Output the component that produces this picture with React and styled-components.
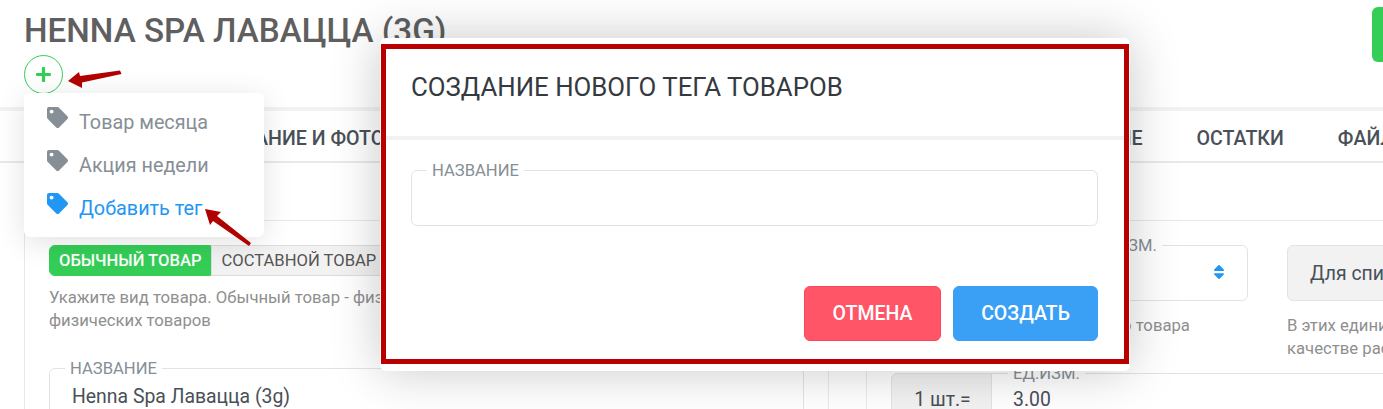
import React from "react";
import styled, { createGlobalStyle } from "styled-components";
import { FaPlus, FaTag, FaSort } from "react-icons/fa";

const GlobalStyle = createGlobalStyle`
  html, body {
    margin: 0;
    padding: 0;
    background: #fff;
    font-family: "Roboto", sans-serif;
    overflow: hidden;
  }
`;

const tabs = [
  "ОПИСАНИЕ И ФОТО",
  "ХАРАКТЕРИСТИКИ",
  "КОМПЛЕКТ",
  "СКЛАД",
  "ЦЕНООБРАЗОВАНИЕ",
  "ОСТАТКИ",
  "ФАЙЛЫ",
];

const tags = [
  { label: "Товар месяца" },
  { label: "Акция недели" },
  { label: "Добавить тег", active: true },
];

const App = () => {
  return (
    <Page>
      <GlobalStyle />
      <Header>
        <Title>HENNA SPA ЛАВАЦЦА (3G)</Title>
        <AddButton>
          <FaPlus size={17} />
        </AddButton>
        <SaveButton />
      </Header>

      <Tabs>
        {tabs.map((tab) => (
          <Tab key={tab}>{tab}</Tab>
        ))}
      </Tabs>

      <Columns>
        <Card>
          <ToggleGroup>
            <ToggleButton active>ОБЫЧНЫЙ ТОВАР</ToggleButton>
            <ToggleButton>СОСТАВНОЙ ТОВАР</ToggleButton>
          </ToggleGroup>
          <Hint>
            Укажите вид товара. Обычный товар - физический товар, составной
            товар - набор из
            <br />
            физических товаров
          </Hint>
          <NameField>
            <Legend>НАЗВАНИЕ</Legend>
            <FieldValue>Henna Spa Лавацца (3g)</FieldValue>
          </NameField>
        </Card>

        <Card>
          <UnitRow>
            <UnitColumn>
              <SelectField>
                <Legend>ОСНОВНАЯ ЕДИНИЦА ЕД.ИЗМ.</Legend>
                <SelectArrows>
                  <FaSort size={18} />
                </SelectArrows>
              </SelectField>
              <Hint>Основная единица учёта этого товара</Hint>
            </UnitColumn>
            <UnitColumn>
              <ReadonlyBox>Для списания</ReadonlyBox>
              <Hint>
                В этих единицах товар списывается в
                <br />
                качестве расходного материала
              </Hint>
            </UnitColumn>
          </UnitRow>
          <RatioRow>
            <RatioAddon>1 шт.=</RatioAddon>
            <RatioField>
              <Legend>ЕД.ИЗМ.</Legend>
              <FieldValue>3.00</FieldValue>
            </RatioField>
          </RatioRow>
        </Card>
      </Columns>

      <TagMenu>
        {tags.map((tag) => (
          <TagItem key={tag.label} active={tag.active}>
            <FaTag size={21} />
            <span>{tag.label}</span>
          </TagItem>
        ))}
      </TagMenu>

      <Modal>
        <ModalTitle>СОЗДАНИЕ НОВОГО ТЕГА ТОВАРОВ</ModalTitle>
        <ModalBody>
          <ModalField>
            <Legend>НАЗВАНИЕ</Legend>
          </ModalField>
        </ModalBody>
        <ModalFooter>
          <ActionButton danger>ОТМЕНА</ActionButton>
          <ActionButton>СОЗДАТЬ</ActionButton>
        </ModalFooter>
        <Highlight />
      </Modal>

      <Arrows viewBox="0 0 1383 409">
        <path d="M68 81 L79 72 L80 76 L120 70.5 L121.5 74 L82 82.5 L82 88 Z" />
        <path d="M205 209 L221 212 L217 216 L251 243 L249 246 L213 221 L210 225 Z" />
      </Arrows>
    </Page>
  );
};

const Page = styled.div`
  position: relative;
  width: 1383px;
  height: 409px;
  overflow: hidden;
  background: #fff;
`;

const Header = styled.header`
  height: 107px;
  padding: 12px 24px 0;
  box-sizing: border-box;
  position: relative;
`;

const Title = styled.h1`
  margin: 0;
  font-size: 33.2px;
  line-height: 38px;
  font-weight: 500;
  color: #5f5f5f;
  white-space: nowrap;
`;

const AddButton = styled.div`
  width: 39px;
  height: 39px;
  margin-top: 5px;
  padding-right: 1px;
  box-sizing: border-box;
  border: 1px solid #34ce57;
  border-radius: 50%;
  color: #34ce57;
  display: flex;
  align-items: center;
  justify-content: center;
`;

const SaveButton = styled.div`
  position: absolute;
  left: 1372px;
  top: 7px;
  width: 60px;
  height: 55px;
  border-radius: 6px;
  background: #34ce57;
`;

const Tabs = styled.nav`
  height: 56px;
  box-sizing: border-box;
  border-top: 4px solid #f2f2f2;
  border-bottom: 2px solid #e9e9e9;
  display: flex;
  align-items: center;
  gap: 54px;
  padding: 4px 0 0 201px;
  white-space: nowrap;
`;

const Tab = styled.div`
  font-size: 19.6px;
  font-weight: 500;
  color: #495057;
`;

const Columns = styled.div`
  display: flex;
  gap: 37px;
  padding: 57px 0 0 24px;
`;

const Card = styled.section`
  flex: 0 0 805px;
  min-width: 0;
  height: 300px;
  box-sizing: border-box;
  padding: 24px;
  border: 1px solid #e9e9e9;
  border-radius: 6px;
  background: #fff;
`;

const ToggleGroup = styled.div`
  display: flex;
`;

const ToggleButton = styled.div`
  height: 31px;
  box-sizing: border-box;
  padding: 0 9px;
  display: flex;
  align-items: center;
  font-size: 16.6px;
  font-weight: ${(props) => (props.active ? 500 : 400)};
  color: ${(props) => (props.active ? "#fff" : "#555")};
  background: ${(props) => (props.active ? "#34ce57" : "#f2f2f2")};
  border: 1px solid ${(props) => (props.active ? "#34ce57" : "#ddd")};
  border-radius: ${(props) => (props.active ? "6px 0 0 6px" : "0")};
  white-space: nowrap;
`;

const Hint = styled.p`
  margin: 10px 0 0;
  font-size: 16.7px;
  line-height: 23px;
  color: #8f8f8f;
  white-space: nowrap;
`;

const Legend = styled.span`
  position: absolute;
  left: 15px;
  top: -10px;
  padding: 0 5px;
  background: #fff;
  font-size: 16.6px;
  line-height: 20px;
  color: #868e96;
  white-space: nowrap;
`;

const Field = styled.div`
  position: relative;
  box-sizing: border-box;
  border: 1px solid #e3e3e3;
  border-radius: 6px;
  background: #fff;
`;

const NameField = styled(Field)`
  margin-top: 36px;
  height: 56px;
  padding: 16px 22px 0;
`;

const FieldValue = styled.div`
  font-size: 19.4px;
  line-height: 24px;
  color: #495057;
`;

const UnitRow = styled.div`
  display: grid;
  grid-template-columns: 357px 357px;
  gap: 39px;
`;

const UnitColumn = styled.div`
  min-width: 0;
`;

const SelectField = styled(Field)`
  height: 56px;
  margin-bottom: 13px;
`;

const SelectArrows = styled.span`
  position: absolute;
  right: 19px;
  top: 17px;
  color: #2196f3;
`;

const ReadonlyBox = styled.div`
  height: 56px;
  margin-bottom: 13px;
  box-sizing: border-box;
  padding: 0 22px;
  display: flex;
  align-items: center;
  border: 1px solid #e3e3e3;
  border-radius: 6px;
  background: #f2f2f2;
  font-size: 19.4px;
  color: #495057;
  white-space: nowrap;
`;

const RatioRow = styled.div`
  display: flex;
  margin-top: 13px;
  width: 600px;
`;

const RatioAddon = styled.div`
  width: 101px;
  height: 56px;
  box-sizing: border-box;
  padding: 14px 0 0 2px;
  text-align: center;
  border: 1px solid #e3e3e3;
  border-radius: 6px 0 0 6px;
  background: #f2f2f2;
  font-size: 19.4px;
  color: #495057;
`;

const RatioField = styled(Field)`
  flex: 1;
  height: 56px;
  padding: 14px 20px 0;
  border-left-color: transparent;
  border-radius: 0 6px 6px 0;
`;

const TagMenu = styled.div`
  position: absolute;
  left: 24px;
  top: 93px;
  width: 240px;
  height: 144px;
  box-sizing: border-box;
  padding: 8px 0 0 23px;
  border-radius: 6px;
  background: #fff;
  box-shadow: 0 5px 30px rgba(0, 0, 0, 0.12);
`;

const TagItem = styled.div`
  height: 43px;
  display: flex;
  align-items: flex-start;
  gap: 11px;
  font-size: 19.8px;
  line-height: 43px;
  color: ${(props) => (props.active ? "#2196f3" : "#868e96")};

  svg {
    margin-top: 6px;
  }
`;

const Modal = styled.div`
  position: absolute;
  left: 380px;
  top: 38px;
  width: 750px;
  height: 333px;
  box-sizing: border-box;
  border-radius: 6px;
  background: #fff;
  box-shadow: 0 0 50px rgba(0, 0, 0, 0.22);
`;

const ModalTitle = styled.h2`
  margin: 0;
  height: 102px;
  box-sizing: border-box;
  padding: 35px 31px 0;
  border-bottom: 4px solid #f2f2f2;
  font-size: 25.8px;
  line-height: 28px;
  font-weight: 400;
  color: #343a40;
`;

const ModalBody = styled.div`
  padding: 30px 32px 0 31px;
`;

const ModalField = styled(Field)`
  height: 56px;
`;

const ModalFooter = styled.div`
  display: flex;
  justify-content: flex-end;
  gap: 12px;
  padding: 60px 32px 0 0;
`;

const ActionButton = styled.div`
  height: 55px;
  width: ${(props) => (props.danger ? "137px" : "145px")};
  box-sizing: border-box;
  display: flex;
  align-items: center;
  justify-content: center;
  border-radius: 6px;
  font-size: 19.5px;
  font-weight: 500;
  color: #fff;
  background: ${(props) => (props.danger ? "#ff5566" : "#3aa0f5")};
  border: 1px solid ${(props) => (props.danger ? "#ff4558" : "#3aa0f5")};
`;

const Highlight = styled.div`
  position: absolute;
  left: 1px;
  top: 6px;
  right: 1px;
  bottom: 7px;
  border: 5px solid #b90000;
  pointer-events: none;
`;

const Arrows = styled.svg`
  position: absolute;
  left: 0;
  top: 0;
  width: 1383px;
  height: 409px;
  fill: #b00000;
  pointer-events: none;
`;

export default App;
